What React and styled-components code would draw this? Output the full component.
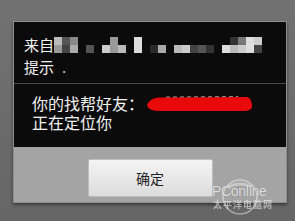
import React from "react";
import styled, { createGlobalStyle } from "styled-components";

const GlobalStyle = createGlobalStyle`
  html, body {
    margin: 0;
    padding: 0;
    background: #6c6c6c;
    width: 295px;
    height: 221px;
    overflow: hidden;
    font-family: "Noto Sans CJK SC", "Noto Sans", sans-serif;
  }
`;

const Screen = styled.div`
  position: relative;
  width: 295px;
  height: 221px;
  padding: 21px 0 0 13px;
  box-sizing: border-box;
  background: linear-gradient(#727272, #666666);
`;

const Dialog = styled.div`
  width: 272px;
  border: 1px solid #8e8e8e;
  box-shadow: 0 2px 3px rgba(0, 0, 0, 0.45);
  display: flex;
  flex-direction: column;
`;

const Title = styled.div`
  background: #0b0b0b;
  padding: 12px 10px 5px;
  color: #f2f2f2;
  font-size: 15px;
  line-height: 22px;
`;

const TitleLine = styled.div`
  display: flex;
  align-items: center;
  height: 22px;
`;

const Mosaic = styled.div`
  display: grid;
  grid-template-columns: repeat(26, 8px);
  grid-template-rows: 8px 8px;
  filter: blur(0.4px);
`;

const Cell = styled.div`
  background: ${(p) => p.$c || "transparent"};
`;

const Dot = styled.span`
  color: #bbbbbb;
  margin-left: 8px;
`;

const Divider = styled.div`
  height: 1px;
  background: #4a4a4a;
`;

const Body = styled.div`
  background: #0b0b0b;
  padding: 10px 18px 15px;
  color: #f2f2f2;
  font-size: 16px;
  line-height: 19px;
  height: 38px;
`;

const BodyLine = styled.div`
  display: flex;
  align-items: center;
  height: 19px;
`;

const Footer = styled.div`
  background: #a4a4a4;
  display: flex;
  justify-content: center;
  padding: 12px 0 5px;
`;

const Button = styled.button`
  width: 125px;
  height: 38px;
  border: 1px solid #bdbdbd;
  border-radius: 2px;
  background: linear-gradient(#f4f4f4, #dcdcdc);
  color: #222;
  font-family: "Noto Sans CJK SC", sans-serif;
  font-size: 14px;
  padding: 0;
`;

const Watermark = styled.div`
  position: absolute;
  left: 212px;
  top: 177px;
  width: 80px;
  height: 42px;
  color: rgba(255, 255, 255, 0.75);
  pointer-events: none;
`;

const Brand = styled.div`
  position: absolute;
  left: 0;
  top: 7px;
  font-family: "Liberation Sans", Arial, sans-serif;
  font-size: 14px;
  line-height: 15px;
  letter-spacing: -0.3px;
  text-shadow: 0 0 1px rgba(0, 0, 0, 0.3);
`;

const BrandSub = styled.div`
  position: absolute;
  left: 1px;
  top: 23px;
  font-size: 9px;
  line-height: 10px;
  font-weight: bold;
  letter-spacing: 1px;
  white-space: nowrap;
  opacity: 0.7;
`;

const row1 = ["#bbb", "#555", "#888", null, null, null, null, "#999", null, null, "#ddd", null, null, null, null, null, null, null, null, null, null, null, "#333", "#777", "#ddd", "#ccc"];
const row2 = ["#999", "#444", "#aaa", null, "#555", null, "#ccc", "#999", "#bbb", null, "#ddd", null, "#2a2a2a", "#aaa", null, "#bbb", "#ccc", "#444", "#555", "#333", null, "#ddd", "#bbb", "#ccc", "#ddd", "#444"];

const Scribble = () => (
  <svg width="108" height="16" viewBox="0 0 108 16" style={{ marginLeft: 2, flexShrink: 0 }}>
    <path
      d="M1 9 Q3 3 12 1.5 L101 1 Q105 2 106 8 Q107 14 100 15 L14 15 Q2 15 1 9 Z"
      fill="#e80a0a"
    />
    <path d="M20 1 L92 0.5" stroke="rgba(255,255,255,0.55)" strokeWidth="1" strokeDasharray="4 3" />
  </svg>
);

const Globe = () => (
  <svg width="40" height="40" viewBox="0 0 40 40" style={{ position: "absolute", left: 8, top: 0 }}>
    <circle cx="20" cy="20" r="17" fill="none" stroke="rgba(255,255,255,0.45)" strokeWidth="1.5" />
    <path d="M8 10 Q20 4 32 10" fill="none" stroke="rgba(255,255,255,0.4)" strokeWidth="3" />
  </svg>
);

const App = () => (
  <>
    <GlobalStyle />
    <Screen>
      <Dialog>
        <Title>
          <TitleLine>
            来自
            <Mosaic>
              {row1.map((c, i) => (
                <Cell key={"a" + i} $c={c} />
              ))}
              {row2.map((c, i) => (
                <Cell key={"b" + i} $c={c} />
              ))}
            </Mosaic>
          </TitleLine>
          <TitleLine>
            提示<Dot>.</Dot>
          </TitleLine>
        </Title>
        <Divider />
        <Body>
          <BodyLine>
            你的找帮好友：
            <Scribble />
          </BodyLine>
          <BodyLine>正在定位你</BodyLine>
        </Body>
        <Footer>
          <Button>确定</Button>
        </Footer>
      </Dialog>
      <Watermark>
        <Globe />
        <Brand>PConline</Brand>
        <BrandSub>太平洋电脑网</BrandSub>
      </Watermark>
    </Screen>
  </>
);

export default App;
